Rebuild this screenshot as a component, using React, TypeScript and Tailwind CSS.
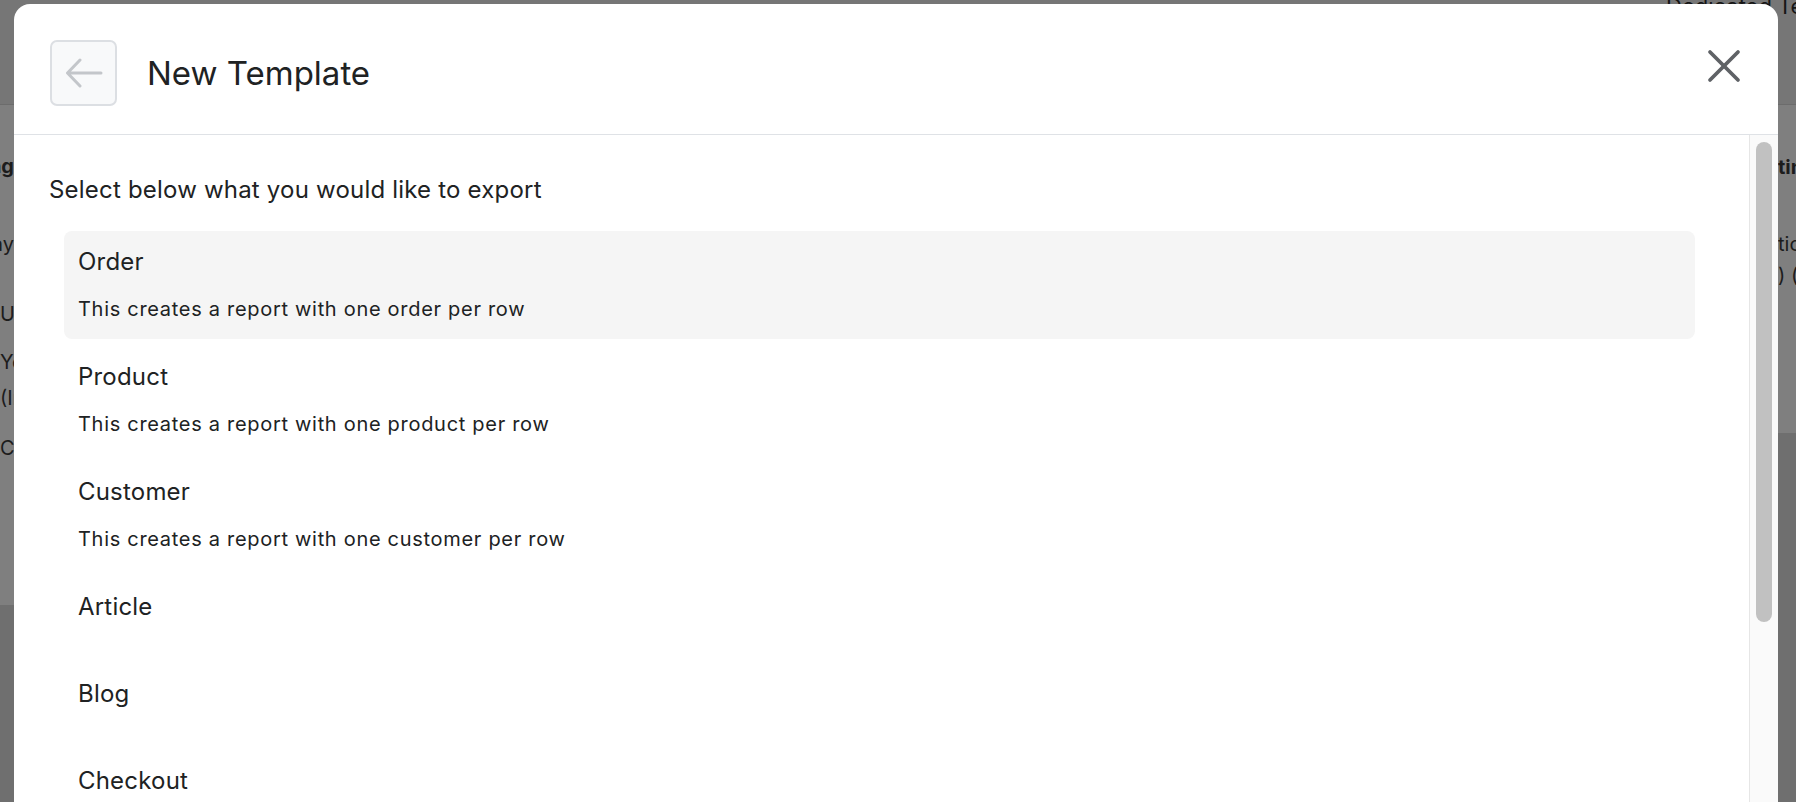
import { X } from 'lucide-react'

interface ExportOption {
  title: string
  description?: string
  active?: boolean
}

const options: ExportOption[] = [
  { title: 'Order', description: 'This creates a report with one order per row', active: true },
  { title: 'Product', description: 'This creates a report with one product per row' },
  { title: 'Customer', description: 'This creates a report with one customer per row' },
  { title: 'Article' },
  { title: 'Blog' },
  { title: 'Checkout' },
  { title: 'Collection' },
]

function BackArrow() {
  return (
    <svg width="38" height="30" viewBox="0 0 38 30" fill="none">
      <path
        d="M36 15H3M15 2L2.5 15L15 28"
        stroke="#c3c6ca"
        strokeWidth="3"
        strokeLinecap="round"
        strokeLinejoin="round"
      />
    </svg>
  )
}

export default function App() {
  return (
    <div className="relative h-[802px] w-[1796px] overflow-hidden bg-[#6f6f6f] font-['Inter','Liberation_Sans',sans-serif] text-[#1c1c1c]">
      {/* page behind the overlay */}
      <div className="flex h-full flex-col">
        <div className="flex h-[105px] justify-end border-b border-[#6c6c6c] bg-[#767676]">
          <span className="-mt-[7px] w-[130px] overflow-hidden whitespace-nowrap text-[22px] leading-[26px] text-[#151515]">
            Dedicated Templates
          </span>
        </div>
        <div className="flex justify-between">
          <div className="h-[500px] w-[14px] overflow-hidden bg-[#7f7f7f] text-[20px] leading-[28px]">
            <div className="mt-[47px] flex justify-end whitespace-nowrap font-bold">Billing</div>
            <div className="mt-[50px] flex justify-end whitespace-nowrap">Day</div>
            <div className="mt-[42px] whitespace-nowrap">URL</div>
            <div className="mt-[20px] whitespace-nowrap">Your</div>
            <div className="mt-[8px] whitespace-nowrap">(Incl.</div>
            <div className="mt-[22px] whitespace-nowrap">Cur</div>
          </div>
          <div className="h-[328px] w-[18px] overflow-hidden bg-[#7f7f7f] text-[20px] leading-[28px]">
            <div className="mt-[48px] whitespace-nowrap font-bold">tings</div>
            <div className="mt-[49px] whitespace-nowrap">tion</div>
            <div className="mt-[3px] whitespace-nowrap">) (</div>
          </div>
        </div>
      </div>

      {/* modal */}
      <div className="absolute left-[14px] top-[4px] flex h-[900px] w-[1764px] flex-col rounded-t-[16px] bg-white">
        <div className="flex h-[131px] shrink-0 items-start border-b border-[#dfe2e6] pl-[36px] pr-[26px]">
          <button className="mt-[36px] flex h-[66px] w-[67px] items-center justify-center rounded-[7px] border-2 border-[#dcdfe3] bg-[#f8f9fa]">
            <BackArrow />
          </button>
          <h1 className="ml-[30px] mt-[49px] text-[33px] leading-[40px] text-[#202223]">New Template</h1>
          <button className="ml-auto mt-[34px] text-[#5f6266]">
            <X size={56} strokeWidth={1.6} />
          </button>
        </div>

        <div className="flex flex-1">
          <div className="flex-1 pl-[35px] pr-[39px] pt-[40px]">
            <p className="text-[24px] leading-[30px] tracking-[0.2px] text-[#202223]">
              Select below what you would like to export
            </p>
            <div className="mx-[15px] mt-[26px] flex flex-col gap-[7px]">
              {options.map((opt) => (
                <div
                  key={opt.title}
                  className={`flex flex-col gap-[18px] rounded-[8px] px-[14px] py-[16px] ${opt.active ? 'bg-[#f5f5f5]' : ''}`}
                >
                  <div className="text-[24px] leading-[30px] tracking-[0.2px] text-[#202223]">{opt.title}</div>
                  <div className="text-[20px] leading-[28px] tracking-[0.7px] text-[#202223] empty:leading-[0px]">
                    {opt.description}
                  </div>
                </div>
              ))}
            </div>
          </div>

          {/* scrollbar */}
          <div className="w-[29px] shrink-0 border-l border-[#e6e6e6] bg-[#fafafa] pl-[6px] pt-[7px]">
            <div className="h-[480px] w-[16px] rounded-full bg-[#c1c1c1]" />
          </div>
        </div>
      </div>
    </div>
  )
}
